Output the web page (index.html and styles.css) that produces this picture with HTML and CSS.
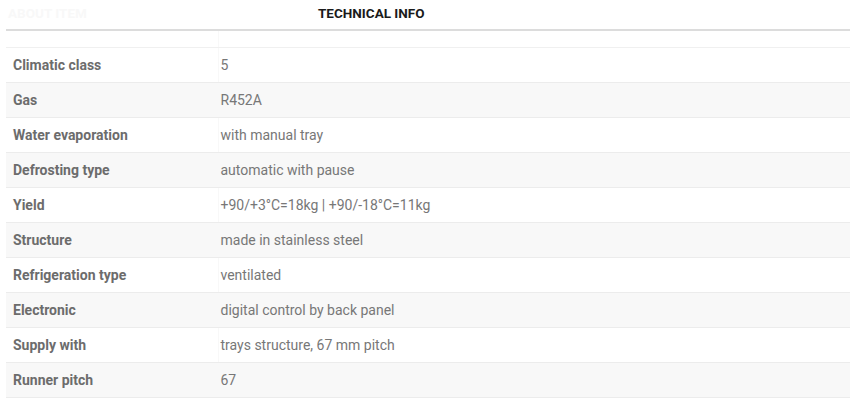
FILE: index.html
```html
<!DOCTYPE html>
<html>
<head>
<meta charset="utf-8">
<link rel="stylesheet" href="styles.css">
</head>
<body>
<div class="wrap">
  <div class="tabs">
    <div class="tab tab-faint">ABOUT ITEM</div>
    <div class="tab tab-active">TECHNICAL INFO</div>
  </div>
  <table class="specs">
    <colgroup><col class="col-k"><col class="col-v"></colgroup>
    <thead>
      <tr class="head-row"><th></th><th></th></tr>
    </thead>
    <tbody>
      <tr><td class="k">Climatic class</td><td class="v">5</td></tr>
      <tr><td class="k">Gas</td><td class="v">R452A</td></tr>
      <tr><td class="k">Water evaporation</td><td class="v">with manual tray</td></tr>
      <tr><td class="k">Defrosting type</td><td class="v">automatic with pause</td></tr>
      <tr><td class="k">Yield</td><td class="v">+90/+3°C=18kg | +90/-18°C=11kg</td></tr>
      <tr><td class="k">Structure</td><td class="v">made in stainless steel</td></tr>
      <tr><td class="k">Refrigeration type</td><td class="v">ventilated</td></tr>
      <tr><td class="k">Electronic</td><td class="v">digital control by back panel</td></tr>
      <tr><td class="k">Supply with</td><td class="v">trays structure, 67 mm pitch</td></tr>
      <tr><td class="k">Runner pitch</td><td class="v">67</td></tr>
    </tbody>
  </table>
</div>
</body>
</html>
```
FILE: styles.css
```css
html, body {
  margin: 0;
  padding: 0;
  background: #fff;
}
body {
  font-family: Roboto, "Liberation Sans", Arial, sans-serif;
}
.wrap {
  padding-left: 6px;
}
.tabs {
  display: flex;
  height: 29px;
  border-bottom: 2px solid #dcdcdc;
  box-sizing: content-box;
}
.tab {
  font-size: 13.5px;
  font-weight: 700;
  line-height: 27px;
}
.tab-faint {
  color: #f8f8f8;
  width: 312px;
  padding-left: 2px;
  box-sizing: border-box;
}
.tab-active {
  color: #1a1a1a;
}
.specs {
  width: 100%;
  border-collapse: collapse;
  table-layout: fixed;
  font-size: 14px;
}
.col-k {
  width: 212px;
}
.head-row th {
  height: 16px;
  padding: 0;
  border-bottom: 1px solid #f0f0f0;
  border-left: 1px solid #f8f8f8;
}
.head-row th:first-child {
  border-left: none;
}
.specs tbody tr td {
  height: 34px;
  padding: 0 0 0 7px;
  border-bottom: 1px solid #ececec;
  vertical-align: middle;
}
.specs tbody tr td.v {
  padding-left: 2px;
  border-left: 1px solid #f8f8f8;
}
.specs tbody tr:nth-child(even) td {
  background: #f8f8f8;
}
.k {
  font-weight: 700;
  color: #6c6c6c;
}
.v {
  color: #777;
}
```
